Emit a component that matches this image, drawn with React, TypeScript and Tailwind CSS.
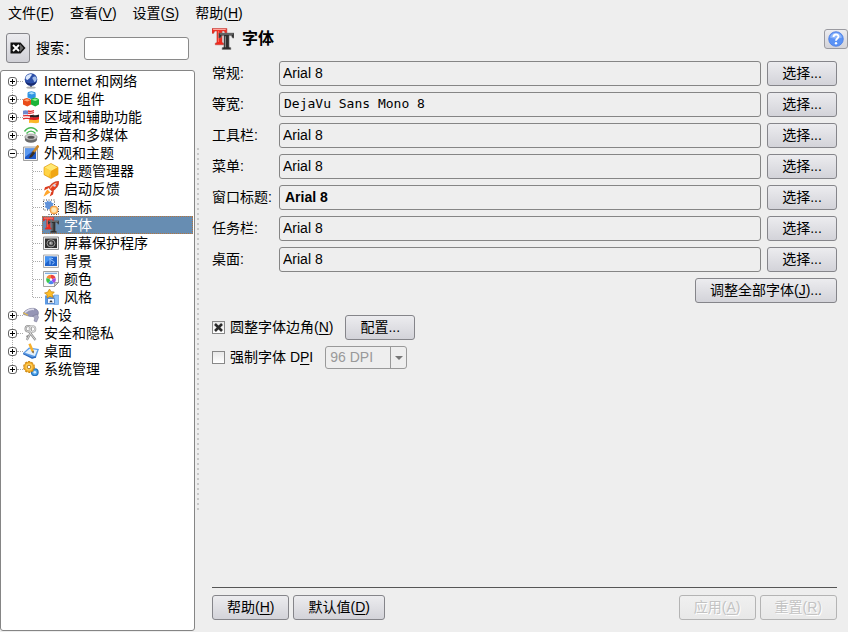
import { useState, type ReactNode } from 'react'

type TreeNode = {
	label: string
	icon: ReactNode
	children?: TreeNode[]
}

function Icon({ children, className = 'size-4' }: { children: ReactNode; className?: string }) {
	return (
		<svg viewBox="0 0 16 16" className={`${className} shrink-0`} aria-hidden="true">
			{children}
		</svg>
	)
}

function FontsIcon({ className }: { className?: string }) {
	return (
		<Icon className={className}>
			<path d="M0 .3h10.800v3.600h-1.200L8.900 2.200H7.300v8.400l1.200.4v1.200H2.400V11l1.200-.4V2.200H2L1.200 3.900H0z" fill="#f22a1e" stroke="#b8403a" strokeWidth=".4" />
			<path d="M.8 1.100h9.200" stroke="#ffa49c" strokeWidth=".8" />
			<path d="M4.700 2.200v8" stroke="#ff6a5c" strokeWidth=".8" />
			<path d="M5 3.700h11v3.600h-1.100l-.8-1.800h-1.700v8.400l1.300.4v1.400H7.400v-1.400l1.300-.4V5.500H7l-.8 1.800H5z" fill="#2e2e2e" stroke="#777" strokeWidth=".4" />
			<path d="M5.800 4.400h9.400M9.800 6v8" stroke="#8c8c8c" strokeWidth=".7" />
		</Icon>
	)
}

const globe = (
	<Icon>
		<ellipse cx="8" cy="14.600" rx="4.800" ry="1.200" fill="#b4b4b4" />
		<path d="M7 12h2v2H7z" fill="#777" />
		<circle cx="8" cy="6.500" r="6.300" fill="#2c4fa8" />
		<path d="M2.800 4C4.500 1.500 6.500.8 8.500 1c1 1.500-1 2-1.200 3.200S5.500 5.500 4.500 7C3 6.500 2.200 5.500 2.800 4z" fill="#dce8fc" />
		<path d="M9.500 4.500c2-1.500 3.500-1 4.200.8.2 2-1.200 3.700-2.400 3.700-1-1.200-.3-2.200-1.800-3z" fill="#a3bdea" />
		<path d="M2.300 8.500a6 6 0 0 0 11.400 0C11 11 5 11 2.300 8.500z" fill="#182a6e" />
	</Icon>
)

const components = (
	<Icon>
		<path d="M4.500 2.500Q4.500 1 6 .8L8.500.3l3 .8q1.200.3 1.200 1.600V6L9 8.500 4.500 6.500z" fill="#2f94e4" />
		<path d="M5.200 2.300L8.500 1l3.400 1.200-3 1.300z" fill="#a6dcfb" />
		<path d="M0 9.500Q0 8 1.300 7.700L4 7l2.800 1q1.200.3 1.200 1.600v4L4.300 15.500 0 13.500z" fill="#ea4c18" />
		<path d="M.8 9.200L4 8l3.200 1.200-3 1.300z" fill="#ffab78" />
		<path d="M8 9q0-1.300 1.300-1.700L12 6.500l2.800 1Q16 7.900 16 9.200v4.300L12.300 15.500 8 13.500z" fill="#1db43a" />
		<path d="M8.800 8.800L12 7.500l3.200 1.200-3 1.300z" fill="#90f294" />
	</Icon>
)

const flags = (
	<Icon>
		<path d="M0 2c3-2 5 1 11-1v10c-5 2-8-1-11 0z" fill="#fff" />
		<path d="M0 4.500c3-1.500 6 1 11-1M0 7c3-1.500 6 1 11-1M0 9.800c3-1.500 6 1 11-1M5 2c2 .5 4 .3 6-.3" fill="none" stroke="#e02f2f" strokeWidth="1.300" />
		<path d="M0 1.800c2-1 3-.6 5-.2v4c-2-.3-3-.6-5 .2z" fill="#6f88cc" />
		<path d="M7 6.500c3-1.500 5 .8 9-1v2.800c-4 1.500-6-.8-9 .5z" fill="#222" />
		<path d="M6.500 8.800c3-1.500 5.500.8 9.500-1v3c-4 1.500-6.500-.8-9.500.5z" fill="#e02020" />
		<path d="M6 11.300c3-1.500 6 .8 10-1v3.300c-4 1.500-7-.8-10 .5z" fill="#fcb82a" />
	</Icon>
)

const sound = (
	<Icon>
		<path d="M1.500 4.500C5-.5 11-.5 14.500 4.500M3.500 6.500C6 3.300 10 3.300 12.500 6.500" fill="none" stroke="#48b954" strokeWidth="1.400" />
		<ellipse cx="8" cy="12" rx="6.200" ry="3.800" fill="#6a6a6a" />
		<ellipse cx="8" cy="10" rx="6.200" ry="3" fill="#cacaca" stroke="#808080" strokeWidth=".6" />
		<ellipse cx="8" cy="10.300" rx="3.500" ry="1.500" fill="#555" />
	</Icon>
)

const appearance = (
	<Icon>
		<path d="M.5 2h14v13.500H.5z" fill="#eee" stroke="#888" strokeWidth=".8" />
		<path d="M2 3.500h11V14H2z" fill="#1f5ac8" />
		<path d="M2 3.500h11L2 12z" fill="#5b99ef" />
		<path d="M15.500.5L9.700 8.200" stroke="#d18a26" strokeWidth="2.600" />
		<path d="M10 6.300l2.200 1.700-3 3.700c-1 1-2.700 1.300-3.500 1 .9-.5 1-1.500 1.600-2.600z" fill="#3b3023" />
	</Icon>
)

const themeManager = (
	<Icon>
		<path d="M8 .5l7 3.800v7.400l-7 3.800-7-3.800V4.300z" fill="#fbbd22" stroke="#d4920c" strokeWidth=".6" strokeLinejoin="round" />
		<path d="M8 .9l6.500 3.600L8 8 1.500 4.500z" fill="#ffe873" />
		<path d="M1.500 4.500L8 8l-2.500 5.500-4-2.300z" fill="#ffd345" />
		<path d="M8 8l6.700-3.500v7L8 15z" fill="#f0a614" />
	</Icon>
)

const rocket = (
	<Icon>
		<path d="M15.800.3C10.500.5 8 3 5.500 6.800l3.700 3.500C13.500 7.500 15.800 5 15.800.3z" fill="#e6401f" stroke="#a62a12" strokeWidth=".5" />
		<path d="M6.500 4.800L2 6.200 1 9.500l4-2zM11 9l-1 4.500-3.300 2L8.300 11z" fill="#db3a1c" />
		<path d="M4.500 8.500l3 3C5.500 12.500 3.500 14 .5 15.500 1.500 13 2.500 10.500 4.500 8.500z" fill="#ffa62d" />
		<path d="M13.500 2C10.500 3 8.500 5 7 7.500" stroke="#ffb28c" strokeWidth="1.100" fill="none" />
		<circle cx="11.500" cy="4.500" r="1.300" fill="#cfe3ff" />
	</Icon>
)

const icons = (
	<Icon>
		<path d="M1.500 3l2 .3.800-1.800 1.700 1.300 2-1 .7 2 2 .5-1 1.800.8 1.900-2 .6-.5 2-2-.7-1.800 1-.6-2-2-.6 1-1.800z" fill="#5f92da" />
		<path d="M.5 1h11v10H.5z" fill="none" stroke="#333" strokeWidth=".9" strokeDasharray="1 1.500" />
		<circle cx="11" cy="11" r="3.900" fill="#ffce80" stroke="#f0933a" />
		<circle cx="11" cy="11" r="2.300" fill="#ffe9b8" />
		<path d="M5.500 15.500h10v-10" fill="none" stroke="#333" strokeWidth=".9" strokeDasharray="1 1.500" />
	</Icon>
)

const screenSaver = (
	<Icon>
		<path d="M.5 2h15v12.500H.5z" fill="#eee" stroke="#777" strokeWidth=".8" />
		<path d="M2 3.500h12V13H2z" fill="#303030" />
		<ellipse cx="8" cy="8.300" rx="4" ry="3.600" fill="none" stroke="#b5b5b5" strokeWidth=".8" />
		<circle cx="8" cy="8.300" r="2" fill="#888" />
		<circle cx="7.500" cy="8" r=".8" fill="#ddd" />
	</Icon>
)

const background = (
	<Icon>
		<path d="M.5 2h15v12.500H.5z" fill="#f4f4f4" stroke="#999" strokeWidth=".8" />
		<path d="M2 3.500h12V13H2z" fill="#1f63cc" />
		<path d="M2 3.500h8L2 11z" fill="#4493f2" />
		<path d="M7 5v6.500M10 5.500c-3 0-3 2 0 2.500 2 1 1 3-1 3" fill="none" stroke="#9fcaff" strokeWidth="1" />
	</Icon>
)

const colors = (
	<Icon>
		<path d="M.5.500h15v11L11.500 15.500H.5z" fill="#fafafa" stroke="#8a8a8a" strokeWidth=".8" />
		<path d="M2 2.300h12" stroke="#74a8e0" strokeWidth="1.200" />
		<path d="M8 8.500L3.500 7A4.700 4.700 0 0 1 8 3.700z" fill="#f58a35" />
		<path d="M8 8.500V3.700A4.700 4.700 0 0 1 12.500 7z" fill="#ee4040" />
		<path d="M8 8.500L12.500 7A4.700 4.700 0 0 1 10.800 12.300z" fill="#a04be0" />
		<path d="M8 8.500l2.800 3.800a4.700 4.700 0 0 1-5.600 0z" fill="#4a86f0" />
		<path d="M8 8.500l-2.800 3.800A4.700 4.700 0 0 1 3.500 7z" fill="#38c94e" />
		<circle cx="8" cy="8.500" r="1.200" fill="#fff" />
		<path d="M15.500 11.500h-4v4z" fill="#ccc" stroke="#777" strokeWidth=".6" />
	</Icon>
)

const style = (
	<Icon>
		<path d="M2 6.500h9v9H2z" fill="#5c9ce6" />
		<path d="M11 6h4.500v9.500H11z" fill="#8fc2f7" stroke="#5b96da" strokeWidth=".6" />
		<path d="M4.500 9.500h7v5h-7z" fill="#f4f8ff" stroke="#3670c0" strokeWidth=".7" />
		<path d="M8 11l1.800 2.200H6.200z" fill="#333" />
		<path d="M6.500 0l1.600 2.700 3.200.3-2 2.400.8 3.100-3.200-1.100L4 9l.1-3.200L1.500 4l3.200-.9z" fill="#ffbe27" stroke="#b87509" strokeWidth=".6" />
	</Icon>
)

const peripherals = (
	<Icon>
		<path d="M.5 5.500C3 2.500 7 1 10.500 1.300c3 .5 5 2.200 5 4.700 0 2-2 3.500-5 3.500H7L.5 7.500z" fill="#9595b5" stroke="#70708f" strokeWidth=".5" />
		<path d="M2 5.500C5 2.800 8 2 11 2.500" fill="none" stroke="#dcdcea" strokeWidth="1.500" />
		<path d="M9.500 9l5-2 1 3.500-2 4.500-2.500-1 .8-3z" fill="#a8a8c2" stroke="#70708f" strokeWidth=".5" />
		<path d="M.3 5.700L5 8.300" stroke="#e6be4b" strokeWidth="1.200" />
	</Icon>
)

const keys = (
	<Icon>
		<path d="M6 6.500l6.500 8.500M8.500 6.500L3.800 15M5.500 12l-2-1" stroke="#8c8c8c" strokeWidth="2.200" fill="none" />
		<circle cx="5.300" cy="3.800" r="2.800" fill="none" stroke="#8c8c8c" strokeWidth="2" />
		<circle cx="9.500" cy="4" r="2.800" fill="none" stroke="#a4a4a4" strokeWidth="2" />
		<path d="M6 6.500l6.500 8.500M8.500 6.500L3.800 15" stroke="#e0e0e0" strokeWidth=".9" fill="none" />
		<circle cx="5.300" cy="3.800" r="2.800" fill="none" stroke="#e0e0e0" strokeWidth=".8" />
		<circle cx="9.500" cy="4" r="2.800" fill="none" stroke="#ececec" strokeWidth=".8" />
	</Icon>
)

const desktop = (
	<Icon>
		<path d="M0 10l6-5.500 10 1.500-3 8.500-4 1z" fill="#5a9be6" />
		<path d="M2 9.700L6.500 5.800l7.800 1.200-2.500 6z" fill="#e3f1fd" />
		<path d="M0 10l9 4.200 4-1v1.600l-4 1-9-4.600z" fill="#2a68bd" />
		<path d="M6.500.8L9.700 8.300" stroke="#f7b02c" strokeWidth="2.500" />
		<path d="M8.600 8.700l2.200-.9-.2 2.700z" fill="#6c4711" />
	</Icon>
)

const gears = (
	<Icon>
		<circle cx="11.800" cy="11.200" r="3.300" fill="#4ea4ea" stroke="#2370bb" strokeWidth="1.200" />
		<circle cx="11.800" cy="11.200" r="1.300" fill="#d9efff" />
		<circle cx="6" cy="6" r="5.300" fill="none" stroke="#c98512" strokeWidth="1.200" strokeDasharray="2.200 1.130" />
		<circle cx="6" cy="6" r="4.900" fill="#f8ae22" stroke="#cf8a12" strokeWidth=".6" />
		<circle cx="6" cy="6" r="3.400" fill="#ffd05c" />
		<circle cx="6" cy="6" r="1.800" fill="#fff" stroke="#a1670b" strokeWidth=".8" />
	</Icon>
)

const tree: TreeNode[] = [
	{ label: 'Internet 和网络', icon: globe, children: [] },
	{ label: 'KDE 组件', icon: components, children: [] },
	{ label: '区域和辅助功能', icon: flags, children: [] },
	{ label: '声音和多媒体', icon: sound, children: [] },
	{
		label: '外观和主题',
		icon: appearance,
		children: [
			{ label: '主题管理器', icon: themeManager },
			{ label: '启动反馈', icon: rocket },
			{ label: '图标', icon: icons },
			{ label: '字体', icon: <FontsIcon /> },
			{ label: '屏幕保护程序', icon: screenSaver },
			{ label: '背景', icon: background },
			{ label: '颜色', icon: colors },
			{ label: '风格', icon: style },
		],
	},
	{ label: '外设', icon: peripherals, children: [] },
	{ label: '安全和隐私', icon: keys, children: [] },
	{ label: '桌面', icon: desktop, children: [] },
	{ label: '系统管理', icon: gears, children: [] },
]

const menus = [
	{ label: '文件', accel: 'F' },
	{ label: '查看', accel: 'V' },
	{ label: '设置', accel: 'S' },
	{ label: '帮助', accel: 'H' },
]

const fonts = [
	{ id: 'general', label: '常规', value: 'Arial 8', className: 'px-[3px]' },
	{ id: 'fixed', label: '等宽', value: 'DejaVu Sans Mono 8', className: "px-1 font-['DejaVu_Sans_Mono',monospace] text-[13px]" },
	{ id: 'toolbar', label: '工具栏', value: 'Arial 8', className: 'px-[3px]' },
	{ id: 'menu', label: '菜单', value: 'Arial 8', className: 'px-[3px]' },
	{ id: 'title', label: '窗口标题', value: 'Arial 8', className: 'px-[5px] font-bold' },
	{ id: 'taskbar', label: '任务栏', value: 'Arial 8', className: 'px-[3px]' },
	{ id: 'desktop', label: '桌面', value: 'Arial 8', className: 'px-[3px]' },
]

function Accel({ children }: { children: string }) {
	return (
		<>
			(<span className="underline underline-offset-2">{children}</span>)
		</>
	)
}

function Button({ children, disabled }: { children: ReactNode; disabled?: boolean }) {
	return (
		<button
			type="button"
			disabled={disabled}
			className="h-[25px] shrink-0 rounded-[3px] border border-[#85858a] bg-linear-to-b from-[#ececef] to-[#d3d3d9] px-[14px] pb-[2px] whitespace-nowrap disabled:border-[#b4b4b4] disabled:from-[#f0f0f0] disabled:to-[#e8e8e8] disabled:text-[#c3c3c3] disabled:[text-shadow:1px_1px_0_white]"
		>
			{children}
		</button>
	)
}

function Branch({ node, open, onToggle, selected, onSelect }: { node: TreeNode; open: boolean; onToggle: () => void; selected: string; onSelect: (label: string) => void }) {
	return (
		<li>
			<div className="flex h-[18px] items-center">
				<button
					type="button"
					aria-label={node.label}
					aria-expanded={open}
					onClick={onToggle}
					className="relative ml-[7px] flex size-[9px] shrink-0 items-center justify-center rounded-[3px] border border-[#666] bg-white"
				>
					<svg viewBox="0 0 5 5" className="size-[5px] shrink-0" shapeRendering="crispEdges" aria-hidden="true">
						<path d={open ? 'M0 2h5v1H0z' : 'M0 2h5v1H0zM2 0h1v5H2z'} />
					</svg>
				</button>
				<span className="w-[6px] border-t border-dotted border-[#aaa]" />
				{node.icon}
				<span className="ml-[5px] whitespace-nowrap">{node.label}</span>
			</div>
			{open && node.children && node.children.length > 0 && (
				<ul className="relative">
					<span className="absolute top-0 bottom-[9px] left-[31px] border-l border-dotted border-[#aaa]" />
					{node.children.map((child) => (
						<li key={child.label} className="flex h-[18px] items-center pl-8">
							<span className="w-[9px] shrink-0 border-t border-dotted border-[#aaa]" />
							<button
								type="button"
								onClick={() => onSelect(child.label)}
								className={`mr-px flex h-[18px] flex-1 items-center gap-1 pl-px text-left whitespace-nowrap ${child.label === selected ? 'bg-[#678db2] text-white outline-1 -outline-offset-1 outline-[#b5763f] outline-dotted' : ''}`}
							>
								{child.icon}
								<span className="pl-px">{child.label}</span>
							</button>
						</li>
					))}
				</ul>
			)}
		</li>
	)
}

function Sidebar() {
	const [open, setOpen] = useState(['外观和主题'])
	const [selected, setSelected] = useState('字体')
	const [query, setQuery] = useState('')

	const toggle = (label: string) => setOpen(open.includes(label) ? open.filter((l) => l !== label) : [...open, label])

	return (
		<aside className="flex w-[195px] shrink-0 flex-col pb-px">
			<div className="flex h-11 items-center gap-[6px] px-[6px]">
				<button
					type="button"
					aria-label="清除"
					onClick={() => setQuery('')}
					className="flex h-[30px] w-6 shrink-0 items-center justify-center rounded-[3px] border border-[#85858a] bg-linear-to-b from-[#ececef] to-[#d0d0d6]"
				>
					<svg viewBox="0 0 16 12" className="h-3 w-4 shrink-0" aria-hidden="true">
						<path d="M.5.5h10L15.500 6l-5 5.500H.5z" fill="#111" />
						<path d="M10 2l3.500 4L10 10z" fill="#666" />
						<path d="M3 3l6 6M9 3L3 9" stroke="#fff" strokeWidth="1.900" />
					</svg>
				</button>
				<label htmlFor="search" className="shrink-0">
					搜索：
				</label>
				<input
					id="search"
					value={query}
					onChange={(e) => setQuery(e.target.value)}
					className="h-[23px] w-full min-w-0 rounded-[3px] border border-[#8a8a8a] bg-white px-1 outline-none"
				/>
			</div>
			<nav className="flex-1 rounded-[3px] border border-[#858585] bg-white pt-px">
				<ul className="relative">
					<span className="absolute top-[9px] bottom-[9px] left-[11px] border-l border-dotted border-[#aaa]" />
					{tree.map((node) => (
						<Branch key={node.label} node={node} open={open.includes(node.label)} onToggle={() => toggle(node.label)} selected={selected} onSelect={setSelected} />
					))}
				</ul>
			</nav>
		</aside>
	)
}

function CheckBox({ id, checked, onChange }: { id: string; checked: boolean; onChange: (checked: boolean) => void }) {
	return (
		<span className="relative flex size-[13px] shrink-0">
			<input
				id={id}
				type="checkbox"
				checked={checked}
				onChange={(e) => onChange(e.target.checked)}
				className="size-[13px] appearance-none border border-[#888] bg-linear-to-b from-[#e8e8e8] to-white"
			/>
			{checked && (
				<svg viewBox="0 0 13 13" className="pointer-events-none absolute inset-0" aria-hidden="true">
					<path d="M3 3l7 7M10 3l-7 7" stroke="#2b2b2b" strokeWidth="2.600" />
				</svg>
			)}
		</span>
	)
}

export default function App() {
	const [smooth, setSmooth] = useState(true)
	const [forceDpi, setForceDpi] = useState(false)

	return (
		<div className="flex min-h-screen flex-col bg-[#eee] font-['Liberation_Sans','Noto_Sans_CJK_SC',sans-serif] text-[14px] leading-[18px] text-black">
			<header className="flex h-[26px] items-center gap-4 px-2">
				{menus.map((menu) => (
					<button key={menu.label} type="button" className="whitespace-nowrap">
						{menu.label}
						<Accel>{menu.accel}</Accel>
					</button>
				))}
			</header>
			<div className="flex flex-1">
				<Sidebar />
				<div className="flex w-[6px] shrink-0 flex-col items-center justify-center">
					<div className="h-[362px] w-[2px] bg-[linear-gradient(#c8c8c8_2px,transparent_2px)] bg-size-[2px_5px]" />
				</div>
				<main className="flex min-w-0 flex-1 flex-col pl-[11px]">
					<div className="flex h-[26px] items-center gap-2">
						<FontsIcon className="size-[22px]" />
						<h1 className="flex-1 text-[16px] font-bold">字体</h1>
						<button
							type="button"
							aria-label="帮助"
							className="flex h-5 w-6 items-center justify-center rounded-[3px] border border-[#9a9aa0] bg-linear-to-b from-[#ececef] to-[#d3d3d9]"
						>
							<svg viewBox="0 0 16 16" className="size-4 shrink-0" aria-hidden="true">
								<circle cx="8" cy="8" r="7.300" fill="#5b93f5" stroke="#4a7ce4" strokeWidth=".8" />
								<path d="M2 6.500a6.200 6.200 0 0 1 12 0C11 8 5 8 2 6.500z" fill="#8db6fb" />
								<path d="M5.500 6c0-3.300 5-3.200 5-.4C10.500 7.500 8 7.500 8 9.700" fill="none" stroke="#fff" strokeWidth="1.900" />
								<circle cx="8" cy="12.200" r="1.200" fill="#fff" />
							</svg>
						</button>
					</div>
					<div className="flex flex-1 flex-col pt-[9px] pr-[11px] pb-3">
						<div className="grid grid-cols-[61px_1fr_70px] items-center gap-[6px]">
							{fonts.map((font) => (
								<div key={font.id} className="contents">
									<label htmlFor={font.id} className="pb-[2px] whitespace-nowrap">
										{font.label}:
									</label>
									<input
										id={font.id}
										readOnly
										value={font.value}
										className={`h-[25px] w-full min-w-0 rounded-[3px] border border-[#858585] pb-[2px] outline-none ${font.className}`}
									/>
									<Button>选择...</Button>
								</div>
							))}
						</div>
						<div className="mt-[6px] flex justify-end">
							<Button>
								调整全部字体
								<Accel>J</Accel>...
							</Button>
						</div>
						<div className="mt-3 flex flex-col items-start gap-[6px]">
							<div className="flex items-center gap-3">
								<div className="flex items-center gap-[5px]">
									<CheckBox id="smooth" checked={smooth} onChange={setSmooth} />
									<label htmlFor="smooth" className="pb-[2px]">
										圆整字体边角
										<Accel>N</Accel>
									</label>
								</div>
								<Button>配置...</Button>
							</div>
							<div className="flex items-center gap-3">
								<div className="flex items-center gap-[5px]">
									<CheckBox id="force-dpi" checked={forceDpi} onChange={setForceDpi} />
									<label htmlFor="force-dpi" className="pb-[2px]">
										强制字体 D<span className="underline underline-offset-2">P</span>I
									</label>
								</div>
								<div className="relative">
									<select
										disabled={!forceDpi}
										aria-label="DPI"
										className="block h-[23px] w-[82px] appearance-none rounded-[3px] border border-[#999] px-1 pb-[2px] opacity-100 disabled:text-[#999]"
									>
										<option>96 DPI</option>
										<option>120 DPI</option>
									</select>
									<span className="pointer-events-none absolute inset-y-0 right-0 flex w-[17px] items-center justify-center border-l border-[#999]">
										<svg viewBox="0 0 8 4" className="h-1 w-2" aria-hidden="true">
											<path d="M0 0h8L4 4z" fill="#777" />
										</svg>
									</span>
								</div>
							</div>
						</div>
						<div className="mt-auto flex gap-1 border-t border-[#555] pt-[7px]">
							<Button>
								帮助
								<Accel>H</Accel>
							</Button>
							<Button>
								默认值
								<Accel>D</Accel>
							</Button>
							<div className="flex-1" />
							<Button disabled>
								应用
								<Accel>A</Accel>
							</Button>
							<Button disabled>
								重置
								<Accel>R</Accel>
							</Button>
						</div>
					</div>
				</main>
			</div>
		</div>
	)
}
